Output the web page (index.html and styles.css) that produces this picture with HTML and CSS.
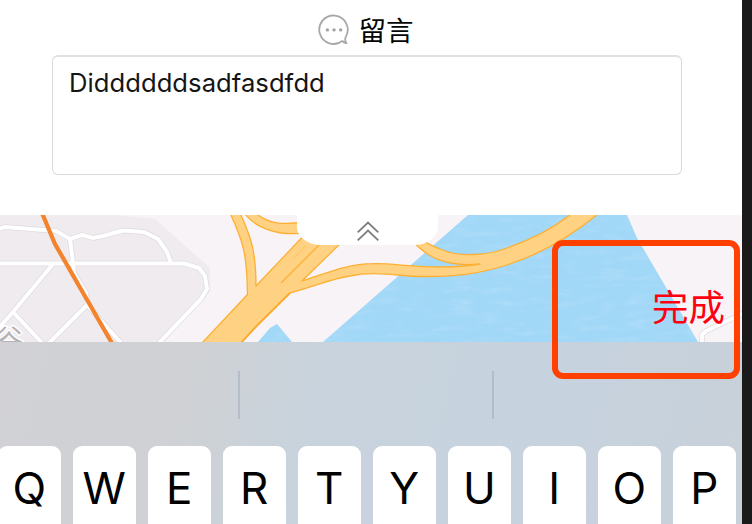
FILE: index.html
```html
<!DOCTYPE html>
<html lang="zh-Hant">
<head>
<meta charset="utf-8">
<title>留言</title>
<link rel="stylesheet" href="styles.css">
</head>
<body>
<main class="screen">
  <section class="message">
    <h1 class="message-title">
      <svg class="bubble" width="32" height="32" viewBox="0 0 32 32">
        <path d="M24.6 26.6A14.2 14.2 0 1 1 27.9 22.6C26.8 25 27.2 27.4 28.2 29C26.8 29.2 25.4 28.4 24.4 26.8" fill="none" stroke="#a8a8a8" stroke-width="1.8"/>
        <g fill="#a3a3a3"><circle cx="9.4" cy="15.9" r="1.7"/><circle cx="16" cy="15.9" r="1.7"/><circle cx="22.7" cy="15.9" r="1.7"/></g>
      </svg>
      <span>留言</span>
    </h1>
    <div class="message-box"><span>Diddddddsadfasdfdd</span></div>
  </section>
  <section class="map">
    <svg class="map-art" width="742" height="127" viewBox="0 215 742 127">
      <defs>
        <filter id="ripple" x="0" y="0" width="100%" height="100%">
          <feTurbulence type="fractalNoise" baseFrequency="0.04 0.16" numOctaves="3" seed="4"/>
          <feColorMatrix values="0 0 0 0 .71  0 0 0 0 .9  0 0 0 0 1  2.4 0 0 0 -1.1"/>
          <feComposite in2="SourceGraphic" operator="in"/>
        </filter>
        <g id="streets" fill="none" stroke-linejoin="round">
          <path d="M-2 229L5 227L56 231L70 239L82 235L93 238L103 236L123 230.5L144 232L158 239L167 252L171 263"/>
          <path d="M-2 263.5H184L199 268L205 276L207 289L201 299L158 344"/>
          <path d="M70 239L73 263L74 273L86 293L88 306L122 344"/>
          <path d="M53 264L13 312L-2 329M13 312L43 344M87 305L48 344"/>
          <path d="M702 344V335L706 331L744 313"/>
        </g>
      </defs>
      <rect y="215" width="742" height="127" fill="#f7f3f7"/>
      <path d="M0 215H115L155 219L210 268V292L160 342H0Z" fill="#efebef"/>
      <path id="water" d="M468 215H627L637 238L698 342H323ZM258 342L270 328L277 324L292 342Z" fill="#a1d7f7"/>
      <path d="M468 215H627L637 238L698 342H323ZM258 342L270 328L277 324L292 342Z" fill="#fff" filter="url(#ripple)" opacity=".2"/>
      <use href="#streets" stroke="#dedade" stroke-width="5.4"/>
      <use href="#streets" stroke="#fff" stroke-width="4"/>
      <path d="M42 213L55 244L113 345" fill="none" stroke="#f4832d" stroke-width="4.2"/>
      <g fill="#ffd283" stroke="#fcb033" stroke-width="1.3" stroke-linejoin="round">
        <path d="M245 214C256 228 276 235 299 233.5V222.5C280 225 268 223 257 214Z"/>
        <path d="M571 214C550 231 527 241 507 248C490 255 459 258 440 249C430 245 424 242 418 237L410 238C423 253 434 260 451 263C460 265 471 265 480 264C469 266 453 267 440 267C413 267 389 263 373 263.7C346 264 327 273 302 281L349 235V228H311L301 238.5L256 286C256 251 251 237 240 213H230C244 243 247 256 247.5 294.5L202 343H241L255 328L290 293C316 286 330 279 350 276C376 270 400 277 427 276.5C458 276.5 478 274 507 265C541 254 570 237 598 214Z"/>
        <path d="M281 283L320 244" fill="none"/>
        <path d="M290 292.8L254 328.5L241 343" fill="none" stroke="#fba92b" stroke-width="1.7"/>
        <path d="M293 259L306 245" fill="none" stroke-width=".5"/>
      </g>
      <text class="place" x="-5" y="350">谷</text>
    </svg>
    <button class="collapse" type="button">
      <svg width="24" height="22" viewBox="0 0 24 22" fill="none" stroke="#7d7d80" stroke-width="1.8"><path d="M1.7 11.4L12 1.6L22.3 11.4M1.7 19.4L12 9.6L22.3 19.4"/></svg>
    </button>
    <button class="done" type="button">完成</button>
  </section>
  <section class="keyboard">
    <div class="suggestions"><i></i><i></i><i></i></div>
    <div class="keys">
      <kbd>Q</kbd><kbd>W</kbd><kbd>E</kbd><kbd>R</kbd><kbd>T</kbd><kbd>Y</kbd><kbd>U</kbd><kbd>I</kbd><kbd>O</kbd><kbd>P</kbd>
    </div>
  </section>
</main>
<div class="highlight"></div>
</body>
</html>
```
FILE: styles.css
```css
* { box-sizing: border-box; }
body {
  margin: 0;
  width: 752px;
  height: 524px;
  overflow: hidden;
  position: relative;
  background: #1a1a1a;
  font-family: Inter, "Noto Sans CJK TC", sans-serif;
}
button { border: 0; padding: 0; font: inherit; }
.screen {
  width: 742px;
  height: 524px;
  overflow: hidden;
  display: grid;
  grid-template-rows: 215px 127px 182px;
  background: #fff;
}
.message { padding: 9px 60px 40px 52px; }
.message-title {
  display: flex;
  align-items: center;
  justify-content: center;
  gap: 9px;
  height: 40px;
  margin: 0 0 6px;
  padding-right: 3px;
  font: 400 27.5px/40px "Noto Sans CJK SC", sans-serif;
  color: #050505;
}
.bubble { display: block; margin-top: 2px; }
.message-box {
  width: 630px;
  height: 120px;
  padding: 9px 16px;
  border: 1.5px solid #dadada;
  border-top: 2px solid #e0e0e0;
  border-radius: 6px;
  font-size: 25.6px;
  letter-spacing: .05px;
  line-height: 34px;
  color: #151515;
}
.map { position: relative; overflow: hidden; }
.map-art { display: block; }
.place {
  font: 400 28px "Noto Sans CJK TC", sans-serif;
  fill: #b5b3b5;
  stroke: #fff;
  stroke-width: 3px;
  paint-order: stroke;
}
.collapse {
  position: absolute;
  left: 297px;
  top: 0;
  width: 141px;
  height: 30px;
  padding: 6px 0 0 1px;
  display: flex;
  justify-content: center;
  background: #fff;
  border-radius: 0 0 24px 24px / 0 0 18px 18px;
}
.done {
  position: absolute;
  right: 17px;
  bottom: 9px;
  background: none;
  color: #ff0010;
  font: 400 36.5px/54px "Noto Sans CJK SC", sans-serif;
}
.keyboard {
  background: linear-gradient(105deg, #d1d1d6 0, #cfd1d4 25%, #c8d3dd 42%, #c6d2de 75%, #c9d1d9 100%);
}
.suggestions {
  height: 104px;
  padding-top: 29px;
  display: grid;
  grid-template-columns: 240px 254px 1fr;
}
.suggestions i { height: 48px; border-right: 2px solid #b4bec8; }
.suggestions i:last-child { border: 0; }
.keys {
  display: grid;
  grid-template-columns: repeat(10, 62.5px);
  gap: 12.5px;
  margin-left: -2px;
}
kbd {
  height: 90px;
  border-radius: 9px;
  background: #fff;
  color: #000;
  font: 400 44px/84px Inter, sans-serif;
  text-align: center;
}
.highlight {
  position: absolute;
  left: 552px;
  top: 240px;
  width: 188px;
  height: 139px;
  border: 6px solid #ff4000;
  border-radius: 11px;
}
```
